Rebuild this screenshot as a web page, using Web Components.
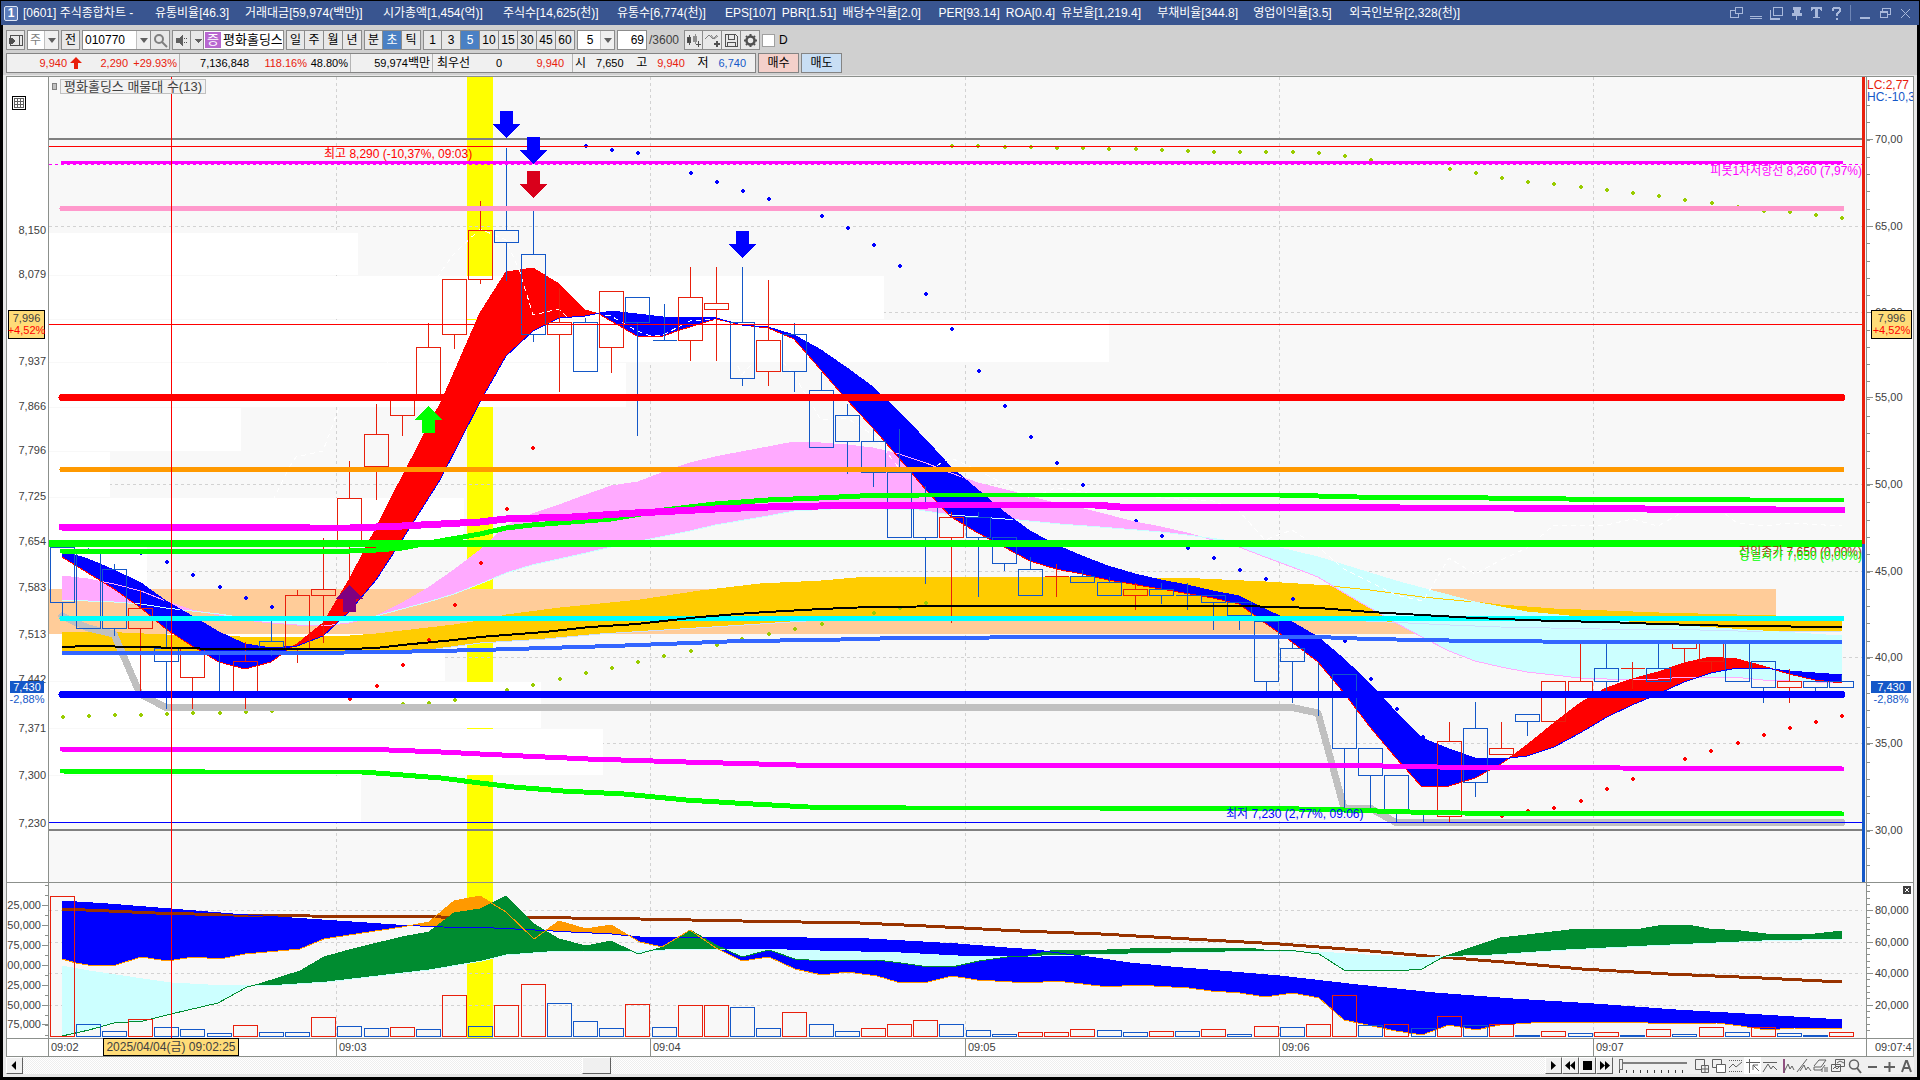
<!DOCTYPE html>
<html lang="ko">
<head>
<meta charset="utf-8">
<title>[0601] 주식종합차트</title>
<style>
  html, body { height: 100%; margin: 0; background: #000; }
  body {
    --line: #8c908c;
    --up: #e8200c;
    --down: #1458c8;
    --ink: #404040;
    --paper: #f8f8f8;
    --tag: #ffdc78;
    --small: 11px;
    --large: 13px;
    font: 12px/14px "Liberation Sans", "Noto Sans CJK KR", sans-serif;
    color: #000;
    overflow: hidden;
  }
</style>
</head>
<body>
<stock-window>
  <title-bar slot="title"></title-bar>
  <chart-toolbar slot="tools"></chart-toolbar>
  <quote-strip slot="tools"></quote-strip>
  <chart-frame></chart-frame>
  <scroll-strip slot="footer"></scroll-strip>
</stock-window>

<script>
class BaseElement extends HTMLElement {
  constructor() {
    super();
    this.attachShadow({ mode: 'open' });
    const template = document.createElement('template');
    template.innerHTML = this.template();
    this.shadowRoot.append(template.content.cloneNode(true));
  }
}

/* ---------- window shell ---------- */

class StockWindow extends BaseElement {
  template() {
    return `
    <style>
      :host { display: flex; flex-direction: column; height: 100vh; box-sizing: border-box; padding: 1px 1px 3px; }
      .panel { flex: 1; min-height: 0; margin: 0 2px; background: #e8e8e8; display: flex; flex-direction: column; }
      .tools { background: #d0d0d0; border-bottom: 1px solid #e8e8e8; box-sizing: border-box; height: 51px;
        padding: 5px 3px 0; display: flex; flex-direction: column; gap: 3px; }
      .main { flex: 1; min-height: 0; display: flex; padding: 0 3px; }
      ::slotted(chart-frame) { flex: 1; min-width: 0; }
      .footer { padding: 0 3px 3px; }
    </style>
    <slot name="title"></slot>
    <div class="panel">
      <div class="tools"><slot name="tools"></slot></div>
      <div class="main"><slot></slot></div>
      <div class="footer"><slot name="footer"></slot></div>
    </div>`;
  }
}
customElements.define('stock-window', StockWindow);

const TITLE = ['[0601] 주식종합차트 -', '유통비율[46.3]', '거래대금[59,974(백만)]', '시가총액[1,454(억)]',
  '주식수[14,625(천)]', '유통수[6,774(천)]', 'EPS[107]', 'PBR[1.51]', '배당수익률[2.0]', 'PER[93.14]', 'ROA[0.4]',
  '유보율[1,219.4]', '부채비율[344.8]', '영업이익률[3.5]', '외국인보유[2,328(천)]'];

// half-width characters take one 6px cell, hangul takes two
const cells = (text) => [...text].reduce((n, c) => n + (c.charCodeAt(0) > 255 ? 2 : 1), 0);

class TitleBar extends BaseElement {
  template() {
    const items = TITLE.map((t) => `<span style="min-width:${cells(t) * 6}px">${t}</span>`).join('');
    return `
    <style>
      :host { display: flex; align-items: center; height: 24px; padding: 0 6px 0 3px; background: #395590; color: #fff; }
      .no { width: 12px; height: 13px; border: 1px solid #dfe6f5; border-radius: 2px; background: #5c7cba; font-weight: bold;
        text-align: center; line-height: 13px; margin-right: 5px; }
      .text { flex: 1; min-width: 0; display: flex; gap: 6px; white-space: nowrap; overflow: hidden; }
      button { all: unset; display: flex; color: #a9b9db; }
      .icons { display: flex; gap: 4px; align-items: center; }
      svg { width: 16px; height: 16px; fill: none; stroke: currentColor; shape-rendering: crispEdges; }
      .sep { width: 1px; height: 16px; background: #6f86b5; margin: 0 2px; }
      .fill { fill: currentColor; }
    </style>
    <span class="no">1</span>
    <div class="text">${items}</div>
    <div class="icons">
      <button aria-label="창 분리"><svg><path d="M7.500 2.500h7v6h-7zM7 5.500H2.500v7h8V9" stroke-width="1.500"/></svg></button>
      <button aria-label="창 숨김"><svg><path d="M2 11.500h12M2 13.500h12"/></svg></button>
      <button aria-label="창 복사"><svg><path d="M5.500 2.500h9v8h-9zM2.500 5v9h9" stroke-width="1.500"/></svg></button>
      <button aria-label="고정"><svg><path class="fill" d="M5 2h7v2h-1v4h2v2H4V8h2V4H5zM8.500 10v5"/></svg></button>
      <button aria-label="글꼴"><svg><path class="fill" stroke="none" d="M3 2h11v4h-1l-1-2h-2v8h2v1H5v-1h2V4H5L4 6H3z"/></svg></button>
      <button aria-label="도움말"><svg><path d="M5 6V4l2-1.500h3L12 4v2L8.500 9v2M8.500 12.500v2" stroke-width="2"/></svg></button>
      <i class="sep"></i>
      <button aria-label="최소화"><svg><path d="M3 12.500h10" stroke-width="2"/></svg></button>
      <button aria-label="이전 크기"><svg><path d="M5.500 6V3.500h8v6H11M3.500 6.500h7v6h-7zM3 7.500h8"/></svg></button>
      <button aria-label="닫기"><svg style="shape-rendering:auto"><path d="M4 4l9 9M13 4l-9 9"/></svg></button>
    </div>`;
  }
}
customElements.define('title-bar', TitleBar);

/* ---------- toolbar ---------- */

class ToolButton extends BaseElement {
  template() {
    return `
    <style>
      :host { display: flex; width: 19px; }
      button { all: unset; flex: 1; box-sizing: border-box; height: 20px; display: flex; align-items: center; justify-content: center;
        border: 1px solid #8c8c8c; background: #e8e8e8; }
      :host([joined]) button { border-left: 0; }
      :host([on]) button { background: #4a80c4; color: #fff; }
    </style>
    <button><slot></slot></button>`;
  }
}
customElements.define('tool-button', ToolButton);

class ComboBox extends BaseElement {
  template() {
    const value = this.getAttribute('value');
    const field = this.hasAttribute('editable')
      ? `<input value="${value}" aria-label="${this.getAttribute('label')}">`
      : `<select aria-label="${this.getAttribute('label')}"><option>${value}</option></select>`;
    return `
    <style>
      :host { display: flex; box-sizing: border-box; height: 20px; border: 1px solid #8c8c8c; background: #fff; }
      select, input { appearance: none; flex: 1; min-width: 0; border: 0; padding: 0 0 0 2px; margin: 0; background: none; font: inherit;
        color: inherit; outline: 0; border-radius: 0; }
      :host([center]) select { text-align: center; }
      i { width: 13px; background: #f0f0f0; border-left: 1px solid #c0c0c0; display: flex; align-items: center; justify-content: center; pointer-events: none; }
      i::after { content: ""; border: 4px solid transparent; border-top: 5px solid #606060; border-bottom: 0; }
    </style>
    ${field}<i></i>`;
  }
}
customElements.define('combo-box', ComboBox);

class ChartToolbar extends BaseElement {
  template() {
    const group = (names, on) => `<div class="group">${names.split(' ').map((n, i) =>
      `<tool-button ${i ? 'joined' : ''} ${n === on ? 'on' : ''}>${n}</tool-button>`).join('')}</div>`;
    return `
    <style>
      :host { display: flex; align-items: center; height: 20px; gap: 2px; }
      .group { display: flex; }
      svg { width: 15px; height: 15px; fill: none; stroke: #505050; shape-rendering: crispEdges; }
      .soft { stroke: #808080; }
      .name { display: flex; box-sizing: border-box; height: 20px; width: 81px; border: 1px solid #8c8c8c; background: #fff; padding: 1px; font-size: var(--large); }
      .name b { width: 16px; background: #b868d0; color: #fff; font-weight: normal; text-align: center; line-height: 16px; }
      input.text { flex: 1; min-width: 0; border: 0; padding: 0 0 0 2px; font: inherit; background: none; }
      .count { box-sizing: border-box; width: 30px; height: 20px; border: 1px solid #8c8c8c; padding: 0 2px; font: inherit; text-align: right; }
      label { display: flex; align-items: center; gap: 4px; }
      input[type=checkbox] { appearance: none; margin: 0; width: 13px; height: 13px; background: #fff; border: 1px solid #a0a0a0; }
      .total { width: 33px; color: #404040; }
      .auto { shape-rendering: auto; }
    </style>
    <tool-button aria-label="메뉴"><svg><path d="M2.500 2.500h12v10h-12z"/><path d="M11.500 2v11"/><path fill="#505050" stroke="none" d="M1 5h3l4 3-4 3H1z"/></svg></tool-button>
    <combo-box value="주" label="구분" style="width:32px;color:#808080"></combo-box>
    <tool-button>전</tool-button>
    <div class="group">
      <combo-box editable value="010770" label="종목코드" style="width:69px"></combo-box>
      <tool-button joined aria-label="검색"><svg class="auto soft" stroke-width="2"><circle cx="6" cy="6" r="4"/><path d="M9 9l5 5"/></svg></tool-button>
    </div>
    <div class="group">
      <tool-button aria-label="소리"><svg><path fill="#606060" stroke="none" d="M2 5h3l4-3v11l-4-3H2z"/><path d="M10.500 5v1M10.500 9v1M12.500 5v1M12.500 9v1"/></svg></tool-button>
      <tool-button joined aria-label="소리 선택" style="width:10px"><svg><path fill="#606060" stroke="none" d="M4 6h7l-3.500 4z"/></svg></tool-button>
    </div>
    <div class="name"><b>증</b><input class="text" value="평화홀딩스" aria-label="종목명"></div>
    ${group('일 주 월 년')}
    ${group('분 초 틱', '초')}
    ${group('1 3 5 10 15 30 45 60', '5')}
    <combo-box center value="5" label="간격" style="width:38px"></combo-box>
    <input class="count" value="69" aria-label="표시 개수"><span class="total">/3600</span>
    <div class="group">
      <tool-button aria-label="차트 추가"><svg><path fill="#404040" d="M1.500 4.500h3v5h-3z"/><path fill="#909090" stroke="#909090" d="M7.500 3.500h3v5h-3zM9 1v10"/><path d="M3 2v10M12.500 8v6M9.500 11.500h6"/></svg></tool-button>
      <tool-button joined aria-label="지표 추가"><svg><path class="auto soft" d="M0 6l4-4 4 4 4-4M6 2l3 4 4-3"/><path stroke-width="2" d="M12 8v6M9 11h6"/></svg></tool-button>
      <tool-button joined aria-label="저장"><svg><path d="M1.500 1.500h10l2 2v10h-12zM4.500 2v4h6V2M3.500 13V9h8v4"/></svg></tool-button>
      <tool-button joined aria-label="설정"><svg class="auto"><circle cx="7.500" cy="7.500" r="4" stroke-width="2.500"/><path stroke-width="2" d="M7.500 1v2M7.500 12v2M1 7.500h2M12 7.500h2M3 3l1 1M11 11l1 1M12 3l-1 1M3 12l1-1"/></svg></tool-button>
    </div>
    <label><input type="checkbox">D</label>`;
  }
}
customElements.define('chart-toolbar', ChartToolbar);

class QuoteStrip extends BaseElement {
  template() {
    return `
    <style>
      :host { display: flex; height: 20px; gap: 2px; white-space: nowrap; }
      .quote { display: flex; box-sizing: border-box; width: 750px; border: 1px solid #848484; background: #f0f0f0; font-size: var(--small); }
      .cell { display: flex; align-items: center; justify-content: flex-end; box-sizing: border-box; border-right: 1px solid #b4b4b4; padding: 0 2px; }
      .cell:last-child { border: 0; }
      .cell > * { text-align: right; }
      .up { color: var(--up); } .down { color: var(--down); }
      .k { font-size: 12px; }
      svg { width: 12px; height: 12px; margin-left: 3px; fill: var(--up); }
      button { all: unset; box-sizing: border-box; width: 41px; border: 1px solid #848484; text-align: center; background: #f4d0ca; line-height: 18px; }
      button + button { background: #c8def4; }
    </style>
    <div class="quote">
      <div class="cell up" style="width:173px"><span>9,940</span><svg><path d="M6 0l6 6H8v6H4V6H0z"/></svg><span style="width:46px">2,290</span><span style="width:49px">+29.93%</span></div>
      <div class="cell" style="width:171px"><span>7,136,848</span><span class="up" style="width:58px">118.16%</span><span style="width:41px">48.80%</span></div>
      <div class="cell" style="width:82px"><span>59,974<span class="k">백만</span></span></div>
      <div class="cell" style="width:140px;padding-right:8px"><span class="k">최우선</span><span style="width:32px">0</span><span class="up" style="width:62px">9,940</span></div>
      <div class="cell" style="width:182px;padding-right:9px"><span class="k">시</span><span style="width:38px">7,650</span><span class="k" style="width:24px">고</span><span class="up" style="width:38px">9,940</span><span class="k" style="width:24px">저</span><span class="down" style="width:38px">6,740</span></div>
    </div>
    <button>매수</button><button>매도</button>`;
  }
}
customElements.define('quote-strip', QuoteStrip);

/* ---------- chart data ---------- */

const candleX = (i) => Math.floor(62 + 26.175 * i) + 0.5;

// colour, high, body top, body bottom, low
const CANDLES = `b 547 547 602 616|b 547 550 628 628|b 563 569 628 635|r 589 608 628 695|b 615 648 661 708|r 648 648 677 708
b 654 694 694 694|r 641 661 694 708|b 615 641 648 655|r 589 595 648 662|r 537 589 595 642|r 460 498 541 577|r 403 434 466 499
r 397 397 415 435|r 322 347 397 397|r 279 279 334 348|r 200 230 279 283|b 147 230 242 280|b 206 254 334 341|r 287 322 334 391
b 317 322 371 371|r 291 291 347 372|b 297 297 322 435|b 303 340 340 340|r 266 297 340 360|r 266 303 309 360|b 266 322 378 385
r 279 340 371 385|b 322 334 371 391|b 371 390 447 447|b 403 415 441 473|b 428 441 472 486|b 428 472 537 537|b 485 504 537 583
r 511 517 537 622|b 511 517 537 596|b 537 537 563 570|b 556 569 595 595|r 563 576 576 596|b 569 576 582 582|b 576 582 595 595
r 582 589 595 609|b 582 589 595 603|b 582 595 595 609|b 595 595 602 629|b 602 602 615 629|b 615 621 681 695|b 642 648 661 702
b 662 694 694 715|b 674 674 748 810|b 748 748 775 810|b 775 775 810 822|b 809 822 822 822|r 721 741 816 822|b 701 728 782 796
r 721 748 754 754|b 714 714 721 735|r 681 681 721 721|r 641 681 694 694|b 641 668 681 695|r 661 668 668 688|b 641 668 681 681
r 641 641 648 662|r 641 641 661 669|b 641 641 681 681|b 661 661 687 702|r 668 681 687 702|b 681 681 687 695|b 674 681 687 687`
  .split(/[|\n]/).map((row) => row.trim().split(' '));

const VOLUMES = `r896 b1024 b1031 r1019 b1027 b1029 b1033 r1025 b1032 b1032 r1017 b1026 b1028 r1027 b1029 r995 b1026 r1005 r984 b1003
b1021 b1028 r1004 b1027 r1005 r1005 b1007 b1028 r1012 b1024 b1031 r1028 r1024 r1020 b1024 b1030 b1034 r1032 r1032 r1029 b1030 b1032
r1031 b1031 r1029 b1034 r1026 b1027 r1024 r995 b1025 r1024 b1028 r1016 b1025 r1024 b1035 r1031 b1033 r1032 b1035 r1029 b1034 r1027
b1032 r1027 b1033 b1035 r1032`.split(/\s+/);

const points = (text) => text.trim().split(/\s+/).map((p) => p.split(',').map(Number));

const LINES = {
  fast: '62,557 88,573 114,589 141,608 166,629 192,646 219,662 245,669 271,662 290,648 297,644 323,623 349,580 376,528 390,500 442,400 480,313 506,272 520,270 533,268 559,284 585,310 599,314 611,321 637,336 663,336 680,330 716,319 742,325 768,328 794,339 821,370 847,400 873,428 899,458 926,490 951,517 978,533 1004,547 1030,561 1056,569 1082,574 1108,580 1161,589 1213,598 1239,604 1265,623 1292,642 1318,662 1344,693 1370,727 1396,758 1422,787 1449,786 1475,778 1501,764 1527,745 1554,723 1580,703 1606,688 1632,679 1658,672 1684,663 1711,657 1737,659 1763,666 1789,674 1815,680 1842,683',
  slow: '62,551 88,559 114,570 141,583 166,601 192,616 219,632 245,644 271,648 297,646 323,636 349,612 376,580 402,540 440,480 480,402 506,356 533,331 559,318 585,316 611,311 637,314 663,317 690,317 716,318 742,325 768,327 794,335 821,350 847,368 873,387 899,412 926,440 951,467 978,490 1004,512 1030,531 1056,545 1082,556 1108,566 1135,574 1161,580 1187,585 1213,591 1239,596 1265,609 1292,622 1318,637 1344,659 1370,684 1396,712 1422,738 1449,749 1475,758 1501,759 1527,756 1554,747 1580,733 1607,717 1632,705 1658,694 1684,682 1711,673 1737,668 1763,668 1789,671 1815,673 1842,675',
  spanA: '62,576 88,579 114,584 141,591 171,603 192,610 219,615 245,620 271,623 297,625 323,626 349,623 376,616 402,603 428,588 454,570 480,550 506,526 532,514 559,505 586,495 611,486 638,482 664,472 690,463 715,457 741,452 768,447 794,442 821,443 847,445 873,448 899,454 926,463 951,473 978,483 1010,491 1031,497 1051,502 1084,509 1135,522 1161,527 1187,533 1213,540 1239,547 1265,557 1292,567 1318,577 1344,593 1370,608 1396,623 1422,637 1449,651 1475,661 1501,667 1527,672 1554,675 1580,678 1607,679 1658,679 1687,677 1733,677 1763,680 1842,683',
  spanB: '62,600 88,601 114,602 141,604 166,608 192,611 219,614 245,618 271,619 297,620 323,620 349,619 376,616 402,609 428,602 454,594 480,584 506,573 532,565 586,553 611,547 650,539 690,531 715,525 768,516 794,511 850,508 919,510 951,515 1019,520 1060,524 1100,527 1161,532 1187,535 1217,539 1280,548 1318,557 1344,565 1396,581 1422,588 1475,602 1501,607 1527,612 1580,617 1600,620 1700,627 1842,636',
  bandTop: '62,632 100,632 166,635 240,637 320,637 350,636 376,634 402,631 454,625 480,621 506,615 560,608 640,600 700,591 760,584 821,581 868,577 965,577 1120,578 1200,579 1266,582 1330,586 1370,590 1422,597 1475,602 1500,605 1554,609 1607,611 1659,613 1737,615 1776,616 1842,620',
  bandLow: '62,651 300,652 385,652 436,649 480,643 545,639 600,634 680,629 760,624 821,620 1083,617 1240,617 1366,621 1450,625 1500,627 1600,629 1700,630 1776,632 1842,631',
  black: '62,647 88,646 141,647 219,649 349,649 376,648 402,645 454,640 480,637 545,632 590,627 637,624 700,617 750,613 821,609 870,607 965,606 1240,606 1318,608 1370,612 1422,615 1475,618 1554,621 1607,622 1659,624 1737,626 1842,627',
  azure: '62,653 300,653 390,652 480,650 546,648 612,646 690,643 740,641 821,640 900,638 1083,637 1318,637 1370,639 1422,640 1475,641 1607,642 1842,642',
  grey: '62,616 88,628 114,634 140,694 166,707.5 1292,707.5 1318,713 1344,808 1370,808 1396,822.5 1842,822.5',
  magentaHigh: '62,527 178,527 310,528 350,528 376,527 402,526 441,524 480,522 506,519 572,517 635,513 715,509 768,507 819,506 930,505 1095,505 1120,507 1279,507 1400,508 1514,508 1645,509 1776,510 1842,510',
  greenHigh: '62,551 179,551 350,551 376,550 402,548 440,541 480,534 506,528 532,525 611,519 664,510 715,504 768,500 819,498 860,496 920,495 1279,495 1357,497 1488,498 1566,499 1750,500 1842,500',
  magentaLow: '62,749 362,749 415,751 441,752 480,754 588,759 686,762 796,765 1100,765 1383,766 1437,767 1620,768 1842,769',
  greenLow: '62,771 205,772 362,772 390,774 441,778 480,783 514,787 563,791 624,794 686,800 735,803 808,807 906,808 1100,808 1253,808 1344,810 1410,812 1460,813 1842,814',
  close: '273,500 290,466 296,457 323,451 340,405 376,380 402,340 428,300 440,273 453,255 480,229 506,240 520,272 533,315 559,309 580,330 600,315 611,316 637,331 651,336 663,335 690,321 716,319 742,375 768,345 794,375 821,420 847,418 873,435 899,468 932,468 951,458 978,470 1030,498 1056,488 1082,492 1108,497 1135,494 1161,498 1213,501 1239,511 1265,540 1292,530 1318,547 1344,569 1370,582 1396,595 1423,601 1449,558 1475,574 1501,560 1527,548 1554,525 1607,525 1632,519 1658,526 1690,508 1720,510 1737,523 1763,526 1789,523 1842,526',
  obv: '62,901 108,904 171,909 233,914 337,921 396,925 443,927 494,928 535,930 571,932 612,934 640,937 730,937 807,938 869,939 905,941 958,944 1007,948 1036,950 1066,954 1089,957 1130,963 1171,967 1220,971 1280,976 1358,985 1435,993 1513,999 1594,1004 1676,1010 1762,1015 1842,1020',
  orange: '62,959 76,963 88,965 116,965 141,957 167,961 194,957 220,959 245,954 300,949 324,939 349,935 402,927 429,922 454,901 480,896 506,912 534,939 559,921 586,929 611,925 640,942 662,947 690,930 716,948 742,961 769,957 795,969 822,975 847,972 877,976 897,982 928,982 952,976 977,980 1030,983 1056,981 1109,987 1136,985 1189,988 1211,991 1240,993 1265,997 1293,993 1319,998 1344,1020 1396,1031 1422,1035 1449,1025 1476,1030 1500,1025 1547,1022 1635,1022 1660,1024 1717,1023 1741,1026 1766,1030 1794,1028 1842,1029',
  green: '62,1036 89,1030 114,1023 143,1021 171,1014 218,1003 247,987 259,984 300,971 324,957 349,950 402,937 429,932 454,913 480,909 506,896 534,924 559,939 586,946 611,941 638,954 664,947 690,930 716,945 742,957 769,950 795,959 822,961 877,960 901,963 922,966 952,967 979,961 1007,957 1028,956 1054,950 1085,951 1130,949 1228,948 1248,948 1264,950 1296,951 1319,954 1344,970 1409,970 1422,969 1443,957 1500,938 1527,935 1578,929 1635,930 1664,925 1688,925 1709,929 1741,931 1766,934 1815,934 1842,931',
  mint: '62,966 89,971 143,979 171,983 208,985 282,985 327,982 429,970 482,961 506,955 547,952 584,951 640,951 690,949 787,950 820,951 901,953 958,956 999,957 1085,955 1171,953 1280,951 1319,952 1396,957 1435,957 1492,955 1566,950 1647,946 1762,941 1842,939',
  brown: '62,909 155,913 233,915 310,916 571,918 640,919 742,921 860,923 926,926 1020,931 1101,934 1171,938 1280,944 1358,950 1427,956 1504,962 1582,969 1668,974 1762,978 1842,982',
};

const DOTS = {
  '#0000ff': '140,553 166,562 192,575 219,587 245,598 271,607 585,146 611,150 637,153 690,173 716,182 742,191 768,199 821,216 847,228 873,245 899,266 925,294 951,329 978,371 1004,406 1030,437 1056,463 1082,485 1135,521 1161,536 1187,548 1213,558 1239,570 1265,579 1292,599 1344,641 1370,679 1396,709 1422,737',
  '#ff0000': '349,699 376,686 402,665 428,640 454,605 480,563 506,509 532,448 1501,816 1527,811 1553,808 1580,801 1606,789 1632,779 1684,759 1710,751 1737,743 1763,735 1789,728 1815,722 1841,716',
  '#99cc00': '62,717 88,716 114,715 140,715 166,714 192,713 219,713 245,712 271,711 402,704 428,703 454,700 506,690 532,685 559,679 585,673 611,668 637,662 663,656 690,651 716,645 741,639 768,634 794,629 821,624 873,613 899,608 925,603 951,146 977,146 1004,147 1030,147 1056,148 1082,148 1108,149 1135,149 1161,150 1187,151 1213,152 1239,152 1265,152 1292,152 1318,153 1344,156 1370,160 1449,169 1475,173 1501,178 1527,182 1553,184 1580,187 1606,190 1632,193 1658,196 1684,200 1711,203 1737,207 1763,211 1789,212 1815,215 1841,218',
};

// volume-at-price rows: top, height, right edge
const PROFILE = [[233, 42, 358], [276, 43, 884], [320, 42, 1109], [363, 44, 626], [408, 43, 241], [452, 45, 110], [498, 48, 464],
  [547, 42, 147], [589, 45, 1776], [634, 47, 445], [682, 46, 541], [729, 46, 603], [776, 46, 361]];

const MINUTES = [336, 650, 965, 1279, 1593];

function valueAt(pts, x) {
  let i = 1;
  while (i < pts.length - 1 && pts[i][0] < x) i++;
  const [x0, y0] = pts[i - 1];
  const [x1, y1] = pts[i];
  return y0 + (y1 - y0) * (x - x0) / (x1 - x0);
}

// two-coloured area between a pair of lines
function ribbon(nameA, nameB, colorAbove, colorBelow) {
  const a = points(LINES[nameA]);
  const b = points(LINES[nameB]);
  const xs = [];
  for (let x = 62; x <= 1842; x += 2) xs.push(x);
  const area = (top, bottom, color) => {
    const forth = xs.map((x) => `${x},${top(x).toFixed(1)}`);
    const back = xs.map((x) => `${x},${bottom(x).toFixed(1)}`).reverse();
    return `<polygon fill="${color}" points="${forth.concat(back).join(' ')}"/>`;
  };
  const ya = (x) => valueAt(a, x);
  const yb = (x) => valueAt(b, x);
  return area((x) => Math.min(ya(x), yb(x)), yb, colorAbove) + area(yb, (x) => Math.max(ya(x), yb(x)), colorBelow);
}

const line = (name, color, width = 1, extra = '') =>
  `<polyline fill="none" stroke="${color}" stroke-width="${width}" stroke-linejoin="round" ${extra} points="${LINES[name]}"/>`;
const level = (y, color, width, x1 = 49, x2 = 1862, extra = '') =>
  `<path stroke="${color}" stroke-width="${width}" ${extra} d="M${x1} ${y}H${x2}"/>`;
const gridLine = (d) => `<path stroke="#d2d2d2" stroke-dasharray="3 3" fill="none" d="${d}"/>`;
const ROUND = 'stroke-linecap="round"';

const stroke = (c) => (c === 'r' ? '#e8200c' : '#1458c8');

function candle([color, high, top, bottom, low], i) {
  const x = candleX(i);
  const y = (v) => Number(v) + 0.5;
  return `<path fill="none" stroke="${stroke(color)}" d="M${x} ${y(high)}V${y(top)}M${x} ${y(bottom)}V${y(low)}M${x - 12} ${y(top)}h24V${y(bottom)}h-24z"/>`;
}

const arrow = (x, y, color, up) =>
  `<path fill="${color}" transform="translate(${x} ${y})${up ? ' scale(1 -1)' : ''}" d="M-6.500 0h13v13h7L0 27l-13.500-14h7z"/>`;

function priceSvg() {
  const dots = Object.entries(DOTS).map(([color, list]) => points(list).map(([x, y]) =>
    `<path fill="${color}" d="M${x - 1} ${y - 1}h1v-1h2v1h1v2h-1v1h-2v-1h-1z"/>`).join('')).join('');
  return `
    <rect x="467" y="77" width="26" height="805" fill="#ffff00"/>
    ${gridLine([226, 312, 484, 571, 657, 743].map((y) => `M49 ${y}.5H1862`).join(''))}
    ${gridLine(MINUTES.map((x) => `M${x}.5 77V882`).join(''))}
    ${PROFILE.map(([y, h, x]) => `<rect x="49" y="${y}" width="${x - 49}" height="${h}" fill="${x === 1776 ? '#ffcc99' : '#fff'}"/>`).join('')}
    ${ribbon('bandTop', 'bandLow', '#ffcc00', '#ffcc00')}
    ${ribbon('spanA', 'spanB', '#ffaaff', '#ccffff')}
    ${line('bandTop', '#ffcc00')}${line('bandLow', '#cce0ff')}
    ${dots}
    ${ribbon('fast', 'slow', '#ff0000', '#0000ff')}
    ${line('spanA', '#ffaaff')}${line('spanB', '#ccffff')}
    ${line('fast', '#ff0000')}${line('slow', '#0000ff')}
    ${line('grey', '#c0c0c0', 7, ROUND)}
    ${line('close', '#fff', 1, 'stroke-dasharray="5 4"')}
    ${CANDLES.map(candle).join('')}
    ${line('greenHigh', '#00ff00', 5, ROUND)}${line('magentaHigh', '#ff00ff', 7, ROUND)}
    ${line('magentaLow', '#ff00ff', 5, ROUND)}${line('greenLow', '#00ff00', 5, ROUND)}
    ${level(618.5, '#00ffff', 5, 62, 1842, ROUND)}
    ${line('black', '#000', 2)}${line('azure', '#3366ff', 4)}
    ${level(139, '#808080', 2)}${level(146.5, '#ff0000', 1)}
    ${level(162.5, '#ff00ff', 3, 61, 1843)}${level(164.5, '#ff00ff', 1, 49, 1862, 'stroke-dasharray="3 3"')}
    ${level(208.5, '#ff99cc', 5, 62, 1842, ROUND)}
    ${level(397.5, '#ff0000', 7, 62, 1842, ROUND)}
    ${level(469.5, '#ff9900', 5, 62, 1842, ROUND)}
    ${level(543.5, '#00ff00', 7)}
    ${level(694.5, '#0000ff', 7, 62, 1842, ROUND)}
    ${level(822.5, '#0000ff', 1)}${level(830, '#808080', 2)}
    ${arrow(506.5, 111, '#0000ff')}${arrow(533.5, 137, '#0000ff')}${arrow(533.5, 171, '#d9001b')}${arrow(742.5, 231, '#0000ff')}
    ${arrow(428.5, 433, '#00ff00', true)}${arrow(349.5, 612, '#800080', true)}
    ${level(324.5, '#ff0000', 1)}
    <path stroke="#ff0000" d="M171.500 77V882"/>`;
}

function volumeSvg() {
  const bars = VOLUMES.map((v, i) => `<path fill="none" stroke="${stroke(v[0])}" d="M${candleX(i) - 12} 1036.500V${v.slice(1)}.5h24V1036.500z"/>`).join('');
  return `
    <rect x="467" y="883" width="26" height="155" fill="#ffff00"/>
    ${gridLine([910, 942, 973, 1005].map((y) => `M49 ${y}.5H1862`).join(''))}
    ${gridLine(MINUTES.map((x) => `M${x}.5 883V1038`).join(''))}
    ${ribbon('obv', 'orange', '#0000ff', '#ff9900')}
    ${line('orange', '#ff9900')}${line('brown', '#993300', 3)}
    ${ribbon('green', 'mint', '#008c30', '#ccffff')}
    ${line('mint', '#ccffff')}${line('green', '#008c30')}${line('obv', '#0000ff')}${line('orange', '#ff9900')}
    ${bars}
    <path stroke="#ff0000" d="M171.500 883V1038"/>`;
}

/* ---------- chart elements ---------- */

class PlotPane extends BaseElement {
  template() {
    const price = this.getAttribute('kind') === 'price';
    return `
    <style>
      :host { display: block; position: relative; overflow: hidden; background: var(--paper); min-width: 0; min-height: 0; }
      svg { display: block; width: 100%; height: 100%; shape-rendering: crispEdges; }
    </style>
    <svg viewBox="${price ? '49 77 1813 805' : '49 883 1813 155'}" preserveAspectRatio="none">${price ? priceSvg() : volumeSvg()}</svg>
    <slot></slot>`;
  }
}
customElements.define('plot-pane', PlotPane);

// positions inside the axes are given on the pane's own pixel scale and turned into percentages
class ValueAxis extends BaseElement {
  template() {
    const from = Number(this.getAttribute('from'));
    const span = Number(this.getAttribute('span'));
    const top = (y) => `top:${((y - from) / span * 100).toFixed(3)}%`;
    const labels = (this.getAttribute('labels') || '').split(' ').filter(Boolean).map((l) => l.split('@'));
    const minor = this.getAttribute('minor') ? this.getAttribute('minor').split(',').map(Number) : null;
    let ticks = '';
    if (minor) for (let y = minor[0]; y < minor[1]; y += minor[2]) ticks += `<i class="tick" style="${top(y)}"></i>`;
    return `
    <style>
      :host { display: block; position: relative; overflow: hidden; background: #fff; color: var(--ink); min-height: 0; font-size: var(--small); }
      span { position: absolute; transform: translateY(-50%); white-space: nowrap; }
      :host([side=left]) span { right: 2px; }
      :host([side=left][kind=volume]) span { right: 7px; }
      :host([side=right]) span { left: 8px; }
      .tick, .major { position: absolute; height: 1px; background: var(--line); }
      .tick { width: 3px; } .major { width: 6px; }
      :host([side=left]) i { right: 0; }
      :host([side=right]) i { left: 0; }
    </style>
    ${ticks}
    ${labels.map(([t, y]) => (this.hasAttribute('majors') ? `<i class="major" style="${top(Number(y))}"></i>` : '') + `<span style="${top(Number(y))}">${t}</span>`).join('')}
    <slot></slot>`;
  }
}
customElements.define('value-axis', ValueAxis);

class PriceTag extends BaseElement {
  template() {
    return `
    <style>
      :host { display: block; position: absolute; box-sizing: border-box; text-align: center; white-space: nowrap; line-height: 12px; color: var(--ink); }
      :host([kind=cursor]) { background: var(--tag); border: 1px solid #000; height: 29px; padding-top: 1px; }
      .rate { color: #ff0000; display: flex; justify-content: center; }
      :host([kind=last]) .price { background: var(--down); color: #fff; }
      :host([kind=last]) .rate { color: var(--down); }
    </style>
    <div class="price"><slot name="price"></slot></div><div class="rate"><slot name="rate"></slot></div>`;
  }
}
customElements.define('price-tag', PriceTag);

class TimeAxis extends BaseElement {
  template() {
    const at = (x) => `left:${((x - 49) / 1813 * 100).toFixed(3)}%`;
    return `
    <style>
      :host { display: block; position: relative; background: #fff; color: var(--ink); border-top: 1px solid var(--line); }
      span { position: absolute; top: 0; padding-left: 2px; border-left: 1px solid var(--line); height: 17px; line-height: 16px; margin-left: -1px; font-size: var(--small); }
      time { position: absolute; top: -1px; height: 16px; line-height: 16px; width: 134px; text-align: center; background: var(--tag); border: 1px solid #000; white-space: nowrap; }
    </style>
    ${['09:02', '09:03', '09:04', '09:05', '09:06', '09:07'].map((t, i) => `<span style="${at(i ? MINUTES[i - 1] + 1 : 49)}">${t}</span>`).join('')}
    <time style="${at(103)}">2025/04/04(금) 09:02:25</time>`;
  }
}
customElements.define('time-axis', TimeAxis);

class ChartFrame extends BaseElement {
  template() {
    const x = (v) => `${((v - 49) / 1813 * 100).toFixed(3)}%`;
    const y = (v) => `${((v - 77) / 805 * 100).toFixed(3)}%`;
    return `
    <style>
      :host { display: grid; box-sizing: border-box; border: 1px solid var(--line); background: #fff;
        grid-template-columns: 42px minmax(0, 1fr) 4px 47px; grid-template-rows: minmax(0, 805fr) minmax(0, 156fr) 18px; }
      .left { border-right: 1px solid var(--line); }
      .right { border-left: 1px solid var(--line); }
      .low { border-top: 1px solid var(--line); }
      .time { border-top: 1px solid var(--line); background: #fff; }
      .bar { background: linear-gradient(to right, transparent 3px, var(--paper) 3px), linear-gradient(#e8200c 58%, #1458c8 58%); }
      .gap { background: var(--paper); }
      .note { position: absolute; white-space: nowrap; transform: translateY(-50%); }
      .legend { position: absolute; left: 3px; top: 2px; display: flex; align-items: center; gap: 3px; color: var(--ink); font-size: var(--large); }
      .legend i { width: 3px; height: 5px; border: 1px solid #808080; background: #c0c0c0; }
      .legend button { all: unset; border: 1px solid #c0c0c0; background: #f0f0f0cc; padding: 0 3px; height: 13px; line-height: 12px; }
      .table { all: unset; position: absolute; left: 5px; top: 19px; display: flex; border: 1px solid #000; }
      .table svg { width: 12px; height: 12px; fill: none; stroke: #606060; shape-rendering: crispEdges; }
      .limits { position: absolute; left: 0; top: 2px; font-size: 12px; line-height: 12px; white-space: nowrap; color: var(--down); }
      .limits b { display: block; font-weight: normal; color: #e8200c; }
      .close { all: unset; position: absolute; right: 2px; top: 3px; width: 8px; height: 8px; background: #404040; }
      .close svg { display: block; width: 8px; height: 8px; stroke: #fff; }
      .end { padding-left: 8px; font-size: var(--small); line-height: 16px; white-space: nowrap; color: var(--ink); }
    </style>
    <value-axis class="left" side="left" from="77" span="805"
      labels="8,150@230 8,079@274 7,937@361 7,866@406 7,796@450 7,725@496 7,654@541 7,583@587 7,513@634 7,442@679 7,371@728 7,300@775 7,230@823">
      <button class="table" aria-label="표 보기"><svg><path d="M1.500 1.500h9v9h-9zM1 4.500h10M4.500 2v9M7.500 2v9M1 7.500h10"/></svg></button>
      <price-tag kind="cursor" style="left:1px;width:37px;top:${y(310)}"><span slot="price">7,996</span><span slot="rate">+4,52%</span></price-tag>
      <price-tag kind="last" style="left:3px;width:34px;top:${y(681)}"><span slot="price">7,430</span><span slot="rate">-2,88%</span></price-tag>
    </value-axis>
    <plot-pane kind="price">
      <div class="legend"><i></i><button>평화홀딩스 매물대 수(13)</button></div>
      <span class="note" style="left:${x(324)};top:${y(154)};color:#ff0000">최고 8,290 (-10,37%, 09:03)</span>
      <span class="note" style="right:0;top:${y(171)};color:#ff00ff">피봇1차저항선 8,260 (7,97%)</span>
      <span class="note" style="right:0;top:${y(552)};color:#993300">전일종가 7,650 (0,00%)</span>
      <span class="note" style="right:0;top:${y(556)};color:#00ff00">당일시가 7,650 (0,00%)</span>
      <span class="note" style="left:${x(1226)};top:${y(814)};color:#0000ff">최저 7,230 (2,77%, 09:06)</span>
    </plot-pane>
    <div class="bar"></div>
    <value-axis class="right" side="right" majors from="77" span="805" minor="105,880,17.28"
      labels="70,00@139 65,00@226 60,00@312 55,00@397 50,00@484 45,00@571 40,00@657 35,00@743 30,00@830">
      <div class="limits"><b>LC:2,77</b>HC:-10,3</div>
      <price-tag kind="cursor" style="left:4px;width:41px;top:${y(310)}"><span slot="price">7,996</span><span slot="rate">+4,52%</span></price-tag>
      <price-tag kind="last" style="left:4px;width:40px;top:${y(681)}"><span slot="price">7,430</span><span slot="rate">-2,88%</span></price-tag>
    </value-axis>

    <value-axis class="left low" side="left" kind="volume" majors from="883" span="155" minor="885,1036,10"
      labels="25,000@905 50,000@925 75,000@945 00,000@965 25,000@985 50,000@1005 75,000@1024"></value-axis>
    <plot-pane class="low" kind="volume"></plot-pane>
    <div class="gap low"></div>
    <value-axis class="right low" side="right" majors from="883" span="155" minor="885,1036,6.3"
      labels="80,000@910 60,000@942 40,000@973 20,000@1005">
      <button class="close" aria-label="지표 닫기"><svg><path d="M2 2l4 4M6 2l-4 4"/></svg></button>
    </value-axis>

    <div class="time left"></div>
    <time-axis></time-axis>
    <div class="time"></div>
    <div class="time right end">09:07:4</div>`;
  }
}
customElements.define('chart-frame', ChartFrame);

/* ---------- scroll bar, replay buttons and drawing tools ---------- */

const TOOLS = [
  ['영역 추가', '<path d="M1.500 1.500h9v10h-9z"/><path fill="#f0f0f0" d="M7.500 7.500h7v7h-7zM11 8v7M8 11h7"/>'],
  ['영역 겹침', '<path d="M1.500 1.500h9v8h-9z"/><path fill="#fff" d="M5.500 6.500h9v8h-9z"/>'],
  ['지표 구간', '<path stroke-dasharray="1 1" d="M1 2.500h14M1 13.500h14"/><path d="M1 10l4-4 3 3 6-5"/>'],
  ['십자선', '<path d="M1 4.500h14M4.500 1v14M14 13L8 7M8 12V7h5"/>'],
  ['수평선', '<path d="M1 4.500h14M1 14l5-8 3 5 2-3 4 4"/>'],
  ['수직선', '<path stroke="#905080" stroke-width="2" d="M5 1v14"/><path d="M5 14l4-8 2 5 2-3 2 4"/>'],
  ['추세선', '<path d="M1 14L11 1M4 13l4-6 2 5 2-3 3 4"/>'],
  ['모두 지우기', '<path d="M1 8l5-6h7l-5 7H1v3h7l4-5M9 14v-3M12 9v5M14 9v5"/>'],
  ['차트 겹침', '<path d="M5.500 1.500h9v7h-9zM1.500 6.500h9v7h-9zM3 11l2-2 2 2 3-3M7 5l3-2 4 2"/>'],
  ['돋보기', '<circle cx="7" cy="6.500" r="4.500" stroke-width="1.500"/><path stroke-width="2" d="M10 10l4 5"/>'],
  ['축소', '<path stroke-width="2" d="M4 9h9"/>'],
  ['확대', '<path stroke-width="2" d="M3 9h11M8.500 4v10"/>'],
  ['자동', '<path stroke-width="2" d="M4 14L8 3h1l4 11M5 10h7"/>'],
];

class ScrollStrip extends BaseElement {
  template() {
    const play = ['M6 4l5 4.500L6 13z', 'M8 4v9L3 8.500zM13 4v9L8 8.500z', 'M4 4h9v9H4z', 'M4 4l5 4.500L4 13zM9 4l5 4.500L9 13z'];
    return `
    <style>
      :host { display: flex; height: 17px; background: #f0f0f0; }
      button { all: unset; box-sizing: border-box; width: 17px; height: 17px; display: flex; align-items: center; justify-content: center; }
      .raised { background: #f0f0f0; border: 1px solid; border-color: #fff #606060 #606060 #fff; }
      .raised svg { width: 15px; height: 15px; }
      .track { flex: 1; min-width: 0; display: flex; background: repeating-conic-gradient(#fff 0 25%, #eee 0 50%) 0 0 / 2px 2px; }
      .before { flex: 560; } .after { flex: 935; }
      .thumb { width: 29px; }
      .speed { width: 80px; height: 17px; display: flex; flex-direction: column; box-sizing: border-box; padding: 2px 6px 0; }
      input { appearance: none; width: 100%; height: 10px; margin: 0; background: linear-gradient(#808080, #808080) 0 3px / 100% 2px no-repeat; }
      input::-webkit-slider-thumb { appearance: none; width: 4px; height: 11px; background: #f0f0f0; border: 1px solid #707070; }
      .marks { height: 3px; margin-top: 1px; background: repeating-linear-gradient(to right, #404040 0 1px, transparent 1px 7px); }
      .tools { display: flex; }
      .tools svg { width: 16px; height: 16px; fill: none; stroke: #606060; }
      .tools .on { background: #fff; }
    </style>
    <button class="raised" aria-label="왼쪽"><svg><path d="M9 3v9L4.500 7.500z"/></svg></button>
    <div class="track"><i class="before"></i><button class="raised thumb" aria-label="스크롤"></button><i class="after"></i></div>
    ${play.map((d) => `<button class="raised" aria-label="재생"><svg viewBox="1 1 15 15"><path d="${d}"/></svg></button>`).join('')}
    <div class="speed"><input type="range" value="0" aria-label="재생 속도"><i class="marks"></i></div>
    <div class="tools">${TOOLS.map(([n, d], i) => `<button class="${i === 3 ? 'on' : ''}" aria-label="${n}"><svg>${d}</svg></button>`).join('')}</div>`;
  }
}
customElements.define('scroll-strip', ScrollStrip);
</script>
</body>
</html>
